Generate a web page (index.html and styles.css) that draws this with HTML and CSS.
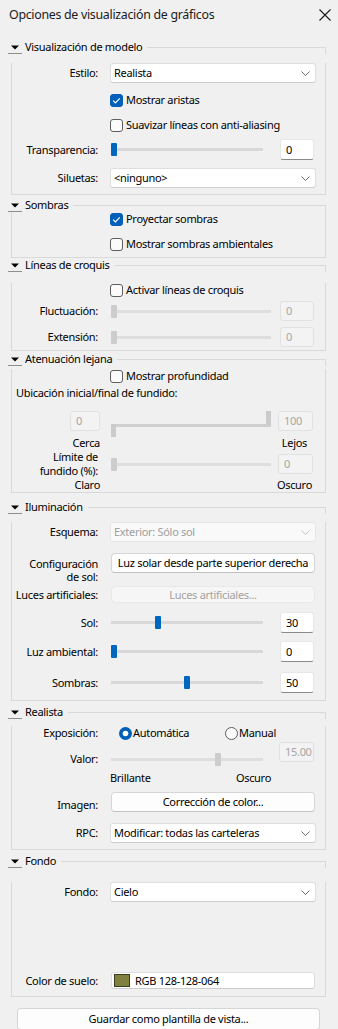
FILE: index.html
```html
<!DOCTYPE html>
<html lang="es">
<head>
<meta charset="utf-8">
<title>Opciones de visualización de gráficos</title>
<link rel="stylesheet" href="styles.css">
</head>
<body>
<div class="titlebar">
  <span class="title">Opciones de visualización de gráficos</span>
  <svg class="close" width="12" height="12" viewBox="0 0 12 12"><path d="M0.5 0.5 L11.5 11.5 M11.5 0.5 L0.5 11.5" stroke="#1a1a1a" stroke-width="1.1" fill="none"/></svg>
</div>

<section class="group g1">
  <div class="group-head"><span class="caret"><svg width="8" height="5" viewBox="0 0 8 5"><path d="M0 0.5 H8 L4 4.5 Z" fill="#000"/></svg></span><span class="group-title">Visualización de modelo</span><span class="head-line"></span></div>
  <div class="group-body pb6">
    <div class="row h20 mt9"><span class="lbl">Estilo:</span><div class="select"><span>Realista</span><svg class="chev" width="9" height="5" viewBox="0 0 9 5"><path d="M0.5 0.5 L4.5 4.5 L8.5 0.5" stroke="#6a6a6a" fill="none"/></svg></div></div>
    <div class="row h13 mt10"><span></span><div class="check"><span class="box on"><svg width="13" height="13" viewBox="0 0 13 13"><path d="M3.2 6.6 L5.4 8.8 L9.8 4.3" stroke="#fff" stroke-width="1.2" fill="none"/></svg></span><span>Mostrar aristas</span></div></div>
    <div class="row h13 mt12"><span></span><div class="check"><span class="box"></span><span>Suavizar líneas con anti-aliasing</span></div></div>
    <div class="row h21 mt8"><span class="lbl">Transparencia:</span><div class="slide-ctl"><div class="slider"><span class="thumb" style="margin-left:0px"></span></div><div class="num">0</div></div></div>
    <div class="row h20 mt8"><span class="lbl">Siluetas:</span><div class="select"><span>&lt;ninguno&gt;</span><svg class="chev" width="9" height="5" viewBox="0 0 9 5"><path d="M0.5 0.5 L4.5 4.5 L8.5 0.5" stroke="#6a6a6a" fill="none"/></svg></div></div>
  </div>
</section>

<section class="group g2">
  <div class="group-head"><span class="caret"><svg width="8" height="5" viewBox="0 0 8 5"><path d="M0 0.5 H8 L4 4.5 Z" fill="#000"/></svg></span><span class="group-title">Sombras</span><span class="head-line"></span></div>
  <div class="group-body pb7">
    <div class="row h13"><span></span><div class="check"><span class="box on"><svg width="13" height="13" viewBox="0 0 13 13"><path d="M3.2 6.6 L5.4 8.8 L9.8 4.3" stroke="#fff" stroke-width="1.2" fill="none"/></svg></span><span>Proyectar sombras</span></div></div>
    <div class="row h13 mt12"><span></span><div class="check"><span class="box"></span><span>Mostrar sombras ambientales</span></div></div>
  </div>
</section>

<section class="group g3">
  <div class="group-head"><span class="caret"><svg width="8" height="5" viewBox="0 0 8 5"><path d="M0 0.5 H8 L4 4.5 Z" fill="#000"/></svg></span><span class="group-title">Líneas de croquis</span><span class="head-line"></span></div>
  <div class="group-body pb3">
    <div class="row h13 mt11"><span></span><div class="check"><span class="box"></span><span>Activar líneas de croquis</span></div></div>
    <div class="row h20 mt5"><span class="lbl">Fluctuación:</span><div class="slide-ctl"><div class="slider wide off"><span class="thumb" style="margin-left:0px"></span></div><div class="num off">0</div></div></div>
    <div class="row h20 mt6"><span class="lbl">Extensión:</span><div class="slide-ctl"><div class="slider wide off"><span class="thumb" style="margin-left:0px"></span></div><div class="num off">0</div></div></div>
  </div>
</section>

<section class="group g4">
  <div class="group-head"><span class="caret"><svg width="8" height="5" viewBox="0 0 8 5"><path d="M0 0.5 H8 L4 4.5 Z" fill="#000"/></svg></span><span class="group-title">Atenuación lejana</span><span class="head-line"></span></div>
  <div class="group-body pb0">
    <div class="row h13 mt3"><span></span><div class="check"><span class="box"></span><span>Mostrar profundidad</span></div></div>
    <div class="note mt4">Ubicación inicial/final de fundido:</div>
    <div class="fade-row mt11">
      <div class="num off near">0</div>
      <div class="range">
        <span class="range-track"></span>
        <span class="range-thumb top"></span>
        <span class="range-thumb bottom"></span>
      </div>
      <div class="num off far">100</div>
    </div>
    <div class="scale-row mt5"><span class="scale-left">Cerca</span><span class="scale-right">Lejos</span></div>
    <div class="row two-line"><span class="lbl">Límite de<br>fundido (%):</span><div class="slide-ctl"><div class="slider wide off"><span class="thumb" style="margin-left:0px"></span></div><div class="num off far">0</div></div></div>
    <div class="scale-row"><span class="scale-left">Claro</span><span class="scale-right dark">Oscuro</span></div>
  </div>
</section>

<section class="group g5">
  <div class="group-head"><span class="caret"><svg width="8" height="5" viewBox="0 0 8 5"><path d="M0 0.5 H8 L4 4.5 Z" fill="#000"/></svg></span><span class="group-title">Iluminación</span><span class="head-line"></span></div>
  <div class="group-body pb7">
    <div class="row h20 mt8"><span class="lbl">Esquema:</span><div class="select off"><span>Exterior: Sólo sol</span><svg class="chev" width="9" height="5" viewBox="0 0 9 5"><path d="M0.5 0.5 L4.5 4.5 L8.5 0.5" stroke="#c4c4c4" fill="none"/></svg></div></div>
    <div class="row top mt11"><span class="lbl stack">Configuración<br>de sol:</span><div class="btn">Luz solar desde parte superior derecha</div></div>
    <div class="row h17 mt3"><span class="lbl">Luces artificiales:</span><div class="btn off">Luces artificiales...</div></div>
    <div class="row h21 mt9"><span class="lbl">Sol:</span><div class="slide-ctl"><div class="slider"><span class="thumb" style="margin-left:44px"></span></div><div class="num">30</div></div></div>
    <div class="row h21 mt8"><span class="lbl">Luz ambiental:</span><div class="slide-ctl"><div class="slider"><span class="thumb" style="margin-left:0px"></span></div><div class="num">0</div></div></div>
    <div class="row h21 mt10"><span class="lbl">Sombras:</span><div class="slide-ctl"><div class="slider"><span class="thumb" style="margin-left:73px"></span></div><div class="num">50</div></div></div>
  </div>
</section>

<section class="group g6">
  <div class="group-head"><span class="caret"><svg width="8" height="5" viewBox="0 0 8 5"><path d="M0 0.5 H8 L4 4.5 Z" fill="#000"/></svg></span><span class="group-title">Realista</span><span class="head-line"></span></div>
  <div class="group-body pb6">
    <div class="row h14 mt7"><span class="lbl">Exposición:</span>
      <div class="radios">
        <div class="radio first"><svg width="13" height="13" viewBox="0 0 13 13"><circle cx="6.5" cy="6.5" r="6.5" fill="#005fb8"/><circle cx="6.5" cy="6.5" r="2.8" fill="#fff"/></svg><span>Automática</span></div>
        <div class="radio"><svg width="13" height="13" viewBox="0 0 13 13"><circle cx="6.5" cy="6.5" r="6" fill="#fbfbfb" stroke="#5c5c5c" stroke-width="1"/></svg><span>Manual</span></div>
      </div>
    </div>
    <div class="row valor mt2"><span class="lbl low">Valor:</span><div class="slide-ctl up"><div class="slider off low"><span class="thumb" style="margin-left:104px"></span></div><div class="num off value">15.00</div></div></div>
    <div class="row h14 mt5"><span></span><div class="ends"><span>Brillante</span><span>Oscuro</span></div></div>
    <div class="row bottom mt7"><span class="lbl">Imagen:</span><div class="btn">Corrección de color...</div></div>
    <div class="row h20 mt11"><span class="lbl">RPC:</span><div class="select"><span>Modificar: todas las carteleras</span><svg class="chev" width="9" height="5" viewBox="0 0 9 5"><path d="M0.5 0.5 L4.5 4.5 L8.5 0.5" stroke="#6a6a6a" fill="none"/></svg></div></div>
  </div>
</section>

<section class="group g7">
  <div class="group-head"><span class="caret"><svg width="8" height="5" viewBox="0 0 8 5"><path d="M0 0.5 H8 L4 4.5 Z" fill="#000"/></svg></span><span class="group-title">Fondo</span><span class="head-line"></span></div>
  <div class="group-body pb7">
    <div class="row h20 mt14"><span class="lbl">Fondo:</span><div class="select"><span>Cielo</span><svg class="chev" width="9" height="5" viewBox="0 0 9 5"><path d="M0.5 0.5 L4.5 4.5 L8.5 0.5" stroke="#6a6a6a" fill="none"/></svg></div></div>
    <div class="row h17 mt70"><span class="lbl">Color de suelo:</span><div class="colorfield"><span class="swatch"></span><span>RGB 128-128-064</span></div></div>
  </div>
</section>

<div class="save">Guardar como plantilla de vista...</div>
</body>
</html>
```

FILE: styles.css
```css
* { box-sizing: border-box; }
html, body { margin: 0; padding: 0; }
body {
  width: 338px;
  height: 1029px;
  overflow: hidden;
  background: #f0f0f0;
  font-family: "Noto Sans", "Open Sans", sans-serif;
  font-size: 11px;
  line-height: 14px;
  letter-spacing: -0.3px;
  color: #000;
}

/* title bar */
.titlebar {
  height: 30px;
  display: flex;
  align-items: center;
  justify-content: space-between;
  padding: 0 7px 0 9px;
}
.title { font-size: 12.4px; color: #1b1b1b; letter-spacing: -0.3px; }
.close { display: block; }

/* groups */
.group { margin-left: 11px; width: 315px; }
.g1 { margin-top: 10px; }
.g2 { margin-top: 3px; }
.g3 { margin-top: 0; }
.g4 { margin-top: 1px; }
.g5 { margin-top: 7px; }
.g6 { margin-top: 4px; }
.g7 { margin-top: 4px; }

.group-head {
  display: flex;
  height: 14px;
  margin-left: -3px;
}
.caret {
  width: 14px;
  height: 14px;
  border-bottom: 1px solid #8e8e8e;
  display: flex;
  align-items: center;
  justify-content: center;
  padding-top: 1px;
}
.caret svg { display: block; }
.group-title { margin-left: 3px; line-height: 14px; white-space: nowrap; }
.head-line {
  flex: 1;
  margin-left: 5px;
  margin-top: 7px;
  border-top: 1px solid #d9d9d9;
  border-right: 1px solid #d9d9d9;
}
.group-body {
  border: 1px solid #d9d9d9;
  border-top: none;
  padding-right: 9px;
}
.pb0 { padding-bottom: 0; }
.pb3 { padding-bottom: 3px; }
.pb6 { padding-bottom: 6px; }
.pb7 { padding-bottom: 7px; }

.mt2 { margin-top: 2px; }
.mt3 { margin-top: 3px; }
.mt4 { margin-top: 4px; }
.mt5 { margin-top: 5px; }
.mt6 { margin-top: 6px; }
.mt7 { margin-top: 7px; }
.mt8 { margin-top: 8px; }
.mt9 { margin-top: 9px; }
.mt10 { margin-top: 10px; }
.mt11 { margin-top: 11px; }
.mt12 { margin-top: 12px; }
.mt14 { margin-top: 14px; }
.mt70 { margin-top: 70px; }

/* rows */
.row {
  display: grid;
  grid-template-columns: 86px 1fr;
  column-gap: 12px;
  align-items: center;
}
.h13 { height: 13px; }
.h14 { height: 14px; }
.h17 { height: 17px; }
.h20 { height: 20px; }
.h21 { height: 21px; }
.row.top { align-items: start; }
.row.bottom { align-items: end; }
.lbl { text-align: right; white-space: nowrap; }
.lbl.stack { line-height: 13px; padding-top: 4px; }

/* select */
.select {
  height: 100%;
  background: #fff;
  border: 1px solid #dedede;
  border-bottom-color: #cdcdcd;
  border-radius: 3px;
  display: flex;
  align-items: center;
  justify-content: space-between;
  padding: 0 5px 0 3px;
}
.select.off { background: #f9f9f9; border-color: #e6e6e6; color: #9e9e9e; }
.chev { display: block; }

/* checkbox */
.check { display: flex; align-items: center; gap: 3px; white-space: nowrap; }
.box {
  width: 13px;
  height: 13px;
  border-radius: 3px;
  border: 1px solid #5e5e5e;
  background: #fbfbfb;
  flex: none;
}
.box.on { background: #005fb8; border-color: #005fb8; }
.box.on svg { display: block; margin: -1px; }

/* sliders */
.slide-ctl { display: flex; align-items: center; height: 100%; }
.slider {
  width: 152px;
  height: 13px;
  margin-left: 1px;
  background: linear-gradient(#d8d8d8, #d8d8d8) left center / 100% 3px no-repeat;
  display: flex;
  align-items: center;
}
.slider.wide { width: 160px; }
.thumb {
  width: 6px;
  height: 13px;
  background: #0067c0;
  border-radius: 1px;
  flex: none;
}
.slider.off { background: linear-gradient(#dedede, #dedede) left center / 100% 3px no-repeat; }
.slider.off .thumb { background: #cdcdcd; }
.num {
  margin-left: auto;
  margin-right: 2px;
  width: 34px;
  height: 21px;
  background: #fff;
  border: 1px solid #e7e7e7;
  border-bottom-color: #8a8a8a;
  border-radius: 3px;
  padding-left: 5px;
  line-height: 19px;
}
.h20 .num { height: 20px; line-height: 18px; }
.num.off {
  background: #f3f3f3;
  border-color: #e1e1e1;
  color: #a6a6a6;
}

/* fade range */
.note { padding-left: 4px; white-space: nowrap; }
.fade-row { display: flex; align-items: flex-start; padding-left: 58px; height: 20px; }
.fade-row .num { height: 20px; line-height: 18px; margin: 0; }
.num.near { width: 30px; }
.num.far { width: 35px; margin-right: 3px; }
.fade-row .num.far { margin-left: 7px; }
.range {
  position: relative;
  width: 160px;
  height: 27px;
  margin-left: 11px;
  flex: none;
}
.range-track {
  position: absolute;
  left: 0;
  right: 0;
  top: 13px;
  height: 3px;
  background: #cfcfcf;
}
.range-thumb { position: absolute; width: 5px; height: 14px; background: #cbcbcb; }
.range-thumb.top { right: 0; top: 0; }
.range-thumb.bottom { left: 0; top: 13px; height: 13px; }

.scale-row { display: flex; height: 14px; white-space: nowrap; }
.scale-left { width: 88px; text-align: right; }
.scale-right { margin-left: auto; margin-right: 9px; }
.scale-right.dark { margin-right: 4px; }
.two-line { height: 28px; }
.two-line .lbl { line-height: 14px; }
.two-line .num { height: 20px; line-height: 18px; }

/* buttons */
.btn {
  height: 20px;
  background: #fdfdfd;
  border: 1px solid #d6d6d6;
  border-bottom-color: #c2c2c2;
  border-radius: 4px;
  display: flex;
  align-items: center;
  justify-content: center;
  white-space: nowrap;
  margin-left: 1px;
  margin-right: 1px;
}
.btn.off { height: 17px; background: #f6f6f6; border-color: #e8e8e8; color: #a2a2a2; }

/* radios */
.radios { display: flex; align-items: center; padding-left: 9px; }
.radio { display: flex; align-items: center; gap: 1px; }
.radio svg { display: block; flex: none; }
.radio.first { width: 106px; }

/* valor */
.valor { height: 24px; align-items: start; }
.lbl.low { margin-top: 10px; }
.slide-ctl.up { align-items: flex-start; }
.slider.low { margin-top: 11px; }
.num.value { width: 35px; height: 20px; line-height: 18px; text-align: right; padding-right: 2px; margin-right: 2px; }
.ends { display: flex; justify-content: space-between; width: 161px; white-space: nowrap; }

/* color field */
.colorfield {
  height: 17px;
  background: #fff;
  border: 1px solid #dedede;
  border-bottom-color: #cdcdcd;
  border-radius: 3px;
  display: flex;
  align-items: center;
  gap: 5px;
  padding-left: 2px;
  margin-left: 1px;
  margin-right: 1px;
}
.swatch {
  width: 16px;
  height: 13px;
  background: #808040;
  border: 1px solid #3c3c1e;
  flex: none;
}

/* save */
.save {
  margin: 11px 0 0 17px;
  width: 303px;
  height: 22px;
  background: #fdfdfd;
  border: 1px solid #d6d6d6;
  border-bottom-color: #c2c2c2;
  border-radius: 4px;
  display: flex;
  align-items: center;
  justify-content: center;
}
```
